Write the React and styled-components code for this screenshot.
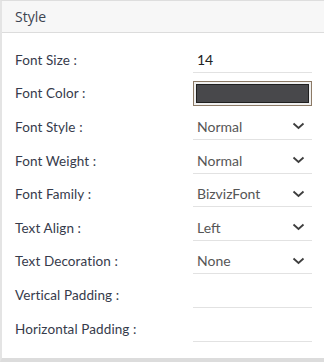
import React from 'react'
import styled, { createGlobalStyle } from 'styled-components'

const GlobalStyle = createGlobalStyle`
    html, body {
        margin: 0;
        padding: 0;
        background: #fff;
    }
    body {
        font-family: 'Lato', 'Liberation Sans', sans-serif;
    }
`;

const Panel = styled.div`
    width: 324px;
    height: 362px;
    box-sizing: border-box;
    border-left: 2px solid #e4e4e4;
    border-top: 1px solid #dedede;
    border-bottom: 4px solid #dcdcdc;
    display: flex;
    flex-direction: column;
`;

const Header = styled.div`
    height: 31px;
    background-color: #f7f7f7;
    border-bottom: 1px solid #dcdcdc;
    display: flex;
    align-items: center;
    padding-left: 13px;
    font-family: 'Open Sans', sans-serif;
    font-size: 14px;
    color: #3d4451;
`;

const Form = styled.div`
    display: grid;
    grid-template-columns: 178px 119px;
    grid-auto-rows: 33.6px;
    padding: 10px 0 0 13px;
    align-items: center;
`;

const Label = styled.div`
    font-size: 13.5px;
    color: #363b4b;
    letter-spacing: 0.1px;
`;

const Field = styled.div`
    height: 26px;
    box-sizing: border-box;
    border-bottom: 1.5px solid #e2e2e2;
    display: flex;
    align-items: center;
    justify-content: space-between;
    padding: 0 7px 0 4px;
    font-size: 14px;
    color: ${props => props.$select ? '#565656' : '#222'};
`;

const ColorOuter = styled.div`
    height: 25px;
    box-sizing: border-box;
    border: 1px solid #8c7a66;
    background: #efefef;
    padding: 2px;
    margin-top: 1px;
`;

const ColorInner = styled.div`
    height: 100%;
    box-sizing: border-box;
    border: 1px solid #1f1f1f;
    background: #48484b;
`;

const Chevron = () => (
    <svg width="13" height="8" viewBox="0 0 13 8">
        <polyline points="1.5,1.5 6.5,6 11.5,1.5" fill="none" stroke="#3e3e3e" strokeWidth="1.8" />
    </svg>
);

const rows = [
    { label: 'Font Size :', type: 'text', value: '14' },
    { label: 'Font Color :', type: 'color' },
    { label: 'Font Style :', type: 'select', value: 'Normal' },
    { label: 'Font Weight :', type: 'select', value: 'Normal' },
    { label: 'Font Family :', type: 'select', value: 'BizvizFont' },
    { label: 'Text Align :', type: 'select', value: 'Left' },
    { label: 'Text Decoration :', type: 'select', value: 'None' },
    { label: 'Vertical Padding :', type: 'text', value: '' },
    { label: 'Horizontal Padding :', type: 'text', value: '' },
];

export default function App() {
    return (
        <>
            <GlobalStyle />
            <Panel>
                <Header>Style</Header>
                <Form>
                    {rows.map(row => (
                        <React.Fragment key={row.label}>
                            <Label>{row.label}</Label>
                            {row.type === 'color' ? (
                                <ColorOuter><ColorInner /></ColorOuter>
                            ) : row.type === 'select' ? (
                                <Field $select>
                                    <span>{row.value}</span>
                                    <Chevron />
                                </Field>
                            ) : (
                                <Field>{row.value}</Field>
                            )}
                        </React.Fragment>
                    ))}
                </Form>
            </Panel>
        </>
    )
}
